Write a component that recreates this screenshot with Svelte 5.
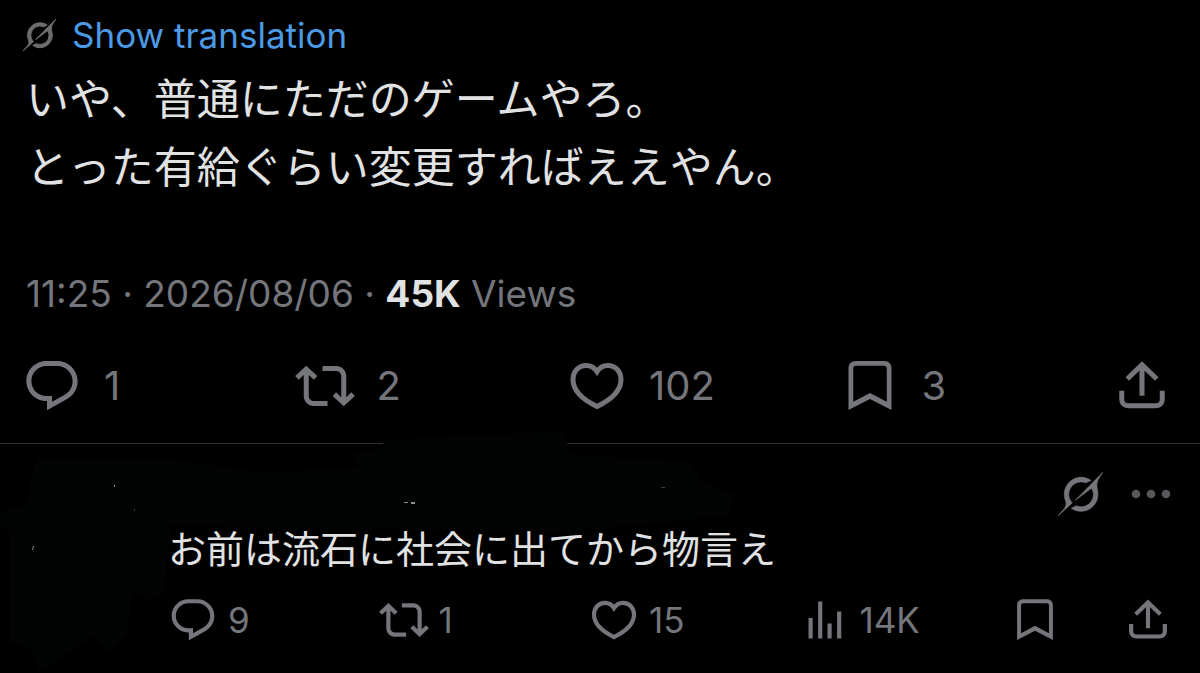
<script lang="ts">
  type Action = { icon: string; label: string; count?: string };

  const postActions: Action[] = [
    { icon: 'reply', label: 'Reply', count: '1' },
    { icon: 'repost', label: 'Repost', count: '2' },
    { icon: 'like', label: 'Like', count: '102' },
    { icon: 'bookmark', label: 'Bookmark', count: '3' },
    { icon: 'share', label: 'Share' },
  ];

  const replyActions: Action[] = [
    { icon: 'reply', label: 'Reply', count: '9' },
    { icon: 'repost', label: 'Repost', count: '1' },
    { icon: 'like', label: 'Like', count: '15' },
    { icon: 'views', label: 'Views', count: '14K' },
    { icon: 'bookmark', label: 'Bookmark' },
    { icon: 'share', label: 'Share' },
  ];

  // filled shapes on a 24 grid
  const ICONS: Record<string, string> = {
    reply:
      'M1.751 10c0-4.42 3.584-8 8.005-8h4.366c4.49 0 8.129 3.64 8.129 8.13 0 2.96-1.607 5.68-4.196 7.11l-8.054 4.46v-3.69h-.067c-4.49.1-8.183-3.51-8.183-8.01zm8.005-6c-3.317 0-6.005 2.69-6.005 6 0 3.37 2.77 6.08 6.138 6.01l.351-.01h1.761v2.3l5.087-2.81c1.951-1.08 3.163-3.13 3.163-5.36 0-3.39-2.744-6.13-6.129-6.13H9.756z',
    repost:
      'M4.5 3.88l4.432 4.14-1.364 1.46L5.5 7.55V16c0 1.1.896 2 2 2H13v2H7.5c-2.209 0-4-1.79-4-4V7.55L1.432 9.48.068 8.02 4.5 3.88zM16.5 6H11V4h5.5c2.209 0 4 1.79 4 4v8.45l2.068-1.93 1.364 1.46-4.432 4.14-4.432-4.14 1.364-1.46 2.068 1.93V8c0-1.1-.896-2-2-2z',
    bookmark:
      'M3.4 21.6V4.8C3.4 3.2 4.6 2 6.2 2h11.6c1.6 0 2.8 1.2 2.8 2.8v16.8L12 17.2zM5.3 18.3L12 14.8l6.7 3.5V4.9c0-.6-.4-1-1-1H6.3c-.6 0-1 .4-1 1z',
    views: 'M4.1 11h2v9.9h-2zM8.7 3.1h2v17.8h-2zM13.2 13.7h2v7.2h-2zM17.8 7.9h2v13h-2z',
  };

  // outlined shapes on the same grid
  const STROKES: Record<string, string> = {
    like: 'M12 6.3C10.9 4.6 9.3 3.8 7.7 3.8 4.6 3.8 2.4 6.2 2.4 9.4c0 4.3 3.6 7.9 9.6 10.8 6-2.9 9.6-6.5 9.6-10.8 0-3.2-2.2-5.6-5.3-5.6-1.6 0-3.2.8-4.3 2.5z',
    share: 'M12 15.9V3.6M6.1 9.2L12 3.5l5.9 5.7M3.9 13.9v3.5c0 1.5 1 2.5 2.5 2.5h11.2c1.5 0 2.5-1 2.5-2.5v-3.5',
  };
</script>

{#snippet grok()}
  <svg class="grok" viewBox="0 0 33 32" aria-hidden="true">
    <path d="M12.745 20.54l10.97-8.19c.539-.4 1.307-.244 1.564.38 1.349 3.288.746 7.241-1.938 9.955-2.683 2.714-6.417 3.31-9.83 1.954l-3.728 1.745c5.347 3.697 11.84 2.782 15.898-1.324 3.219-3.255 4.216-7.692 3.284-11.693l.008.009c-1.351-5.878.332-8.227 3.782-13.031L33 0l-4.54 4.59v-.014L12.743 20.544m-2.263 1.987c-3.837-3.707-3.175-9.446.1-12.755 2.42-2.449 6.388-3.448 9.852-1.979l3.72-1.737c-.67-.49-1.53-1.017-2.515-1.387-4.455-1.854-9.789-.931-13.41 2.728-3.483 3.523-4.579 8.94-2.697 13.561 1.405 3.454-.899 5.898-3.22 8.364C1.49 30.2.666 31.074 0 32l10.478-9.466" />
  </svg>
{/snippet}

{#snippet actionButton(a: Action)}
  <button class="action" aria-label={a.count ? `${a.label}, ${a.count}` : a.label}>
    <svg class="icon" viewBox="0 0 24 24" aria-hidden="true">
      {#if STROKES[a.icon]}
        <path class="line" d={STROKES[a.icon]} />
      {:else}
        <path fill-rule="evenodd" d={ICONS[a.icon]} />
      {/if}
    </svg>
    {#if a.count}<span>{a.count}</span>{/if}
  </button>
{/snippet}

<main>
  <article class="post">
    <a class="translate" href="#translation">
      {@render grok()}
      Show translation
    </a>
    <p class="body" lang="ja">いや、普通にただのゲームやろ。<br />とった有給ぐらい変更すればええやん。</p>
    <p class="meta">11:25 · 2026/08/06 · <strong>45K</strong> Views</p>
    <div class="actions">
      {#each postActions as a}
        {@render actionButton(a)}
      {/each}
    </div>
  </article>

  <article class="reply">
    <!-- marker strokes over the avatar and the name -->
    <svg class="marker" viewBox="0 0 740 240" aria-hidden="true">
      <path d="M36 26L170 27 260 40 360 36 350 22 383 15V9L480 2 562 0 567 10 568 22 690 30 702 50 734 62 728 84 560 100 170 94 164 160 150 168 132 160 128 200 110 220 92 204 62 226 38 240 30 216 10 210 10 100 0 96 0 80 26 72z" />
      <g class="specks">
        <path d="M404 70h4v1h-4zM411 70h4v2h-4zM33 114h1l-1 4h-1zM114 53h1v2h-1z" />
        <path class="faint" d="M134 77h1v2h-1zM661 55h4v1h-4z" />
      </g>
    </svg>
    <div class="avatar"></div>
    <div class="content">
      <div class="tools">
        <button class="tool" aria-label="Explain this post">{@render grok()}</button>
        <button class="tool more" aria-label="More">
          <svg viewBox="0 0 40 10" aria-hidden="true">
            <circle cx="5" cy="5" r="4.3" />
            <circle cx="20" cy="5" r="4.3" />
            <circle cx="35" cy="5" r="4.3" />
          </svg>
        </button>
      </div>
      <p class="body" lang="ja">お前は流石に社会に出てから物言え</p>
      <div class="actions">
        {#each replyActions as a}
          {@render actionButton(a)}
        {/each}
      </div>
    </div>
  </article>
</main>

<style>
  :global(body) {
    margin: 0;
    background: #000;
  }
  main {
    --text: #e1e2e3;
    --muted: #74767b;
    --blue: #4c99e4;
    color: var(--text);
    font-family: Inter, 'Noto Sans CJK JP', sans-serif;
  }
  p {
    margin: 0;
  }
  svg {
    display: block;
    flex: none;
    fill: currentColor;
  }
  button {
    padding: 0;
    border: none;
    background: none;
    color: var(--muted);
    font: inherit;
    cursor: pointer;
  }

  .post {
    padding: 12px 28px 27px 22px;
  }
  .translate {
    display: flex;
    align-items: center;
    gap: 16px;
    width: fit-content;
    padding-left: 1px;
    font-size: 35px;
    line-height: 46px;
    color: var(--blue);
    text-decoration: none;
  }
  .grok {
    stroke: currentColor;
    stroke-width: 0.5;
  }
  .translate .grok {
    width: 33px;
    height: 32px;
    stroke-width: 1;
    color: #6d6d70;
  }
  .post .body {
    padding: 4px 0 0 4px;
    font-size: 43px;
    line-height: 68px;
    font-family: 'Noto Sans CJK JP', sans-serif;
  }
  .meta {
    padding: 72px 0 38px 4px;
    font-size: 37px;
    line-height: 48px;
    color: var(--muted);
  }
  .meta strong {
    color: var(--text);
  }

  .actions {
    display: grid;
    align-items: center;
  }
  .post .actions {
    grid-template-columns: repeat(4, 1fr) 60px;
  }
  .action {
    display: flex;
    align-items: center;
  }
  .post .action {
    gap: 22px;
    font-size: 40px;
    line-height: 60px;
  }
  .post .icon {
    width: 60px;
    height: 60px;
  }
  .line {
    fill: none;
    stroke: currentColor;
    stroke-width: 2;
  }

  .reply {
    position: relative;
    display: grid;
    grid-template-columns: 146px 1fr;
    padding: 25px 27px 26px 22px;
    border-top: 1px solid #2f3133;
  }
  .marker {
    position: absolute;
    top: -12px;
    left: 0;
    width: 740px;
    height: 240px;
    fill: #010403;
  }
  .specks {
    fill: #8b8d8e;
  }
  .faint {
    fill: #3a3c3c;
  }
  .content {
    position: relative;
  }
  .tools {
    display: flex;
    justify-content: flex-end;
    align-items: center;
    gap: 28px;
    height: 50px;
    padding-right: 2px;
  }
  .tool .grok {
    width: 45px;
    height: 44px;
  }
  .more {
    color: #56585b;
  }
  .more svg {
    width: 40px;
    height: 10px;
  }
  .reply .body {
    font-size: 38px;
    line-height: 56px;
    font-family: 'Noto Sans CJK JP', sans-serif;
  }
  .reply .actions {
    grid-template-columns: repeat(4, 1fr) 113px 50px;
    padding-top: 20px;
  }
  .reply .action {
    gap: 10px;
    font-size: 35px;
    line-height: 50px;
  }
  .reply .icon {
    width: 50px;
    height: 50px;
  }
</style>
